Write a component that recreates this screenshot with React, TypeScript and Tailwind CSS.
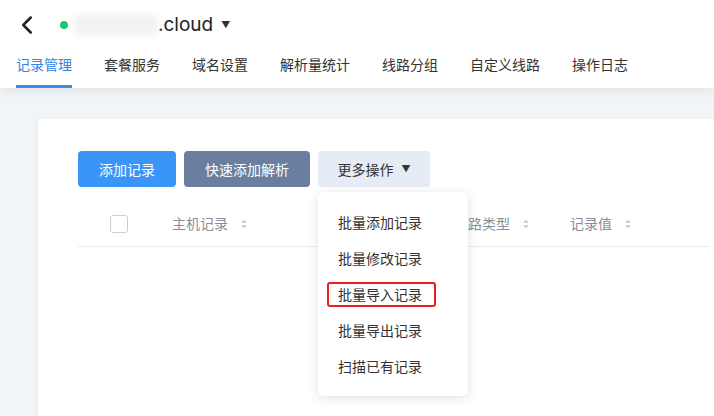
import { ChevronLeft } from 'lucide-react'

const tabs = ['记录管理', '套餐服务', '域名设置', '解析量统计', '线路分组', '自定义线路', '操作日志']

const menuItems = ['批量添加记录', '批量修改记录', '批量导入记录', '批量导出记录', '扫描已有记录']

function SortIcon() {
  return (
    <svg width="8" height="12" viewBox="0 0 8 12" className="ml-3">
      <path d="M4 1.5 L7 5 H1 Z" fill="#c9ced6" />
      <path d="M4 10.5 L7 7 H1 Z" fill="#c9ced6" />
    </svg>
  )
}

export default function App() {
  return (
    <div
      className="w-[714px] h-[416px] overflow-hidden bg-[#f2f5f8] text-[#333]"
      style={{ fontFamily: '"Noto Sans CJK SC", "Noto Sans", sans-serif' }}
    >
      {/* header */}
      <header className="relative z-10 bg-white shadow-[0_4px_10px_rgba(0,0,0,0.06)]">
        <div className="flex items-center h-[50px] pl-[12px]">
          <ChevronLeft className="w-[30px] h-[30px] text-[#222]" strokeWidth={2} />
          <span className="ml-[18px] w-[8px] h-[8px] rounded-full bg-[#1fc46e]" />
          <span className="ml-[6px] w-[84px] h-[20px] bg-[#f1f2f4] blur-[3px]" />
          <span className="text-[19px] leading-none text-[#222] -mt-[2px]" style={{ fontFamily: 'Inter, "Noto Sans", sans-serif' }}>
            .cloud
          </span>
          <span className="ml-[8px] text-[9px] text-[#333]">▼</span>
        </div>
        <nav className="flex gap-8 pl-4 h-[38px]">
          {tabs.map((t, i) => (
            <div
              key={t}
              className={`relative flex items-start pt-[4px] text-[14px] ${i === 0 ? 'text-[#2f86e6]' : 'text-[#333]'}`}
            >
              {t}
              {i === 0 && <span className="absolute left-0 right-0 bottom-0 h-[3px] bg-[#3a8ee6]" />}
            </div>
          ))}
        </nav>
      </header>

      {/* body */}
      <div className="pt-[31px] pl-[38px]">
        <div className="bg-white rounded-tl-[4px] h-[320px] pl-[40px] pt-[32px] shadow-[-2px_0_4px_rgba(0,0,0,0.03)]">
          <div className="flex gap-2">
            <button className="w-[98px] h-[36px] rounded-[4px] bg-[#3995f7] text-white text-[14px]">添加记录</button>
            <button className="w-[126px] h-[36px] rounded-[4px] bg-[#6a7f9f] text-white text-[14px]">快速添加解析</button>
            <div className="relative">
              <button className="w-[112px] h-[36px] rounded-[4px] bg-[#e6ecf5] text-[#333] text-[14px] flex items-center justify-center gap-2">
                更多操作 <span className="text-[9px]">▼</span>
              </button>
              <div className="absolute z-20 left-0 top-[41px] w-[150px] bg-white rounded-[5px] shadow-[0_2px_12px_rgba(0,0,0,0.12)] py-[12px]">
                {menuItems.map((m, i) => (
                  <div key={m} className="h-[36px] flex items-center px-[20px] text-[14px] text-[#333]">
                    {i === 2 ? (
                      <span className="-mx-[11px] px-[9px] h-[25px] flex items-center border-2 border-[#e8201c] rounded-[3px] w-[109px]">
                        {m}
                      </span>
                    ) : (
                      m
                    )}
                  </div>
                ))}
              </div>
            </div>
          </div>

          <div className="mt-[10px] mr-[4px] h-[50px] pt-[4px] flex items-center border-b border-[#e8ebef] text-[14px] text-[#8a8f97]">
            <span className="ml-[32px] w-[18px] h-[18px] rounded-[3px] border border-[#c9ced6]" />
            <span className="ml-[44px] flex items-center">主机记录<SortIcon /></span>
            <span className="ml-[206px] flex items-center">线路类型<SortIcon /></span>
            <span className="ml-[40px] flex items-center">记录值<SortIcon /></span>
          </div>
        </div>
      </div>
    </div>
  )
}
